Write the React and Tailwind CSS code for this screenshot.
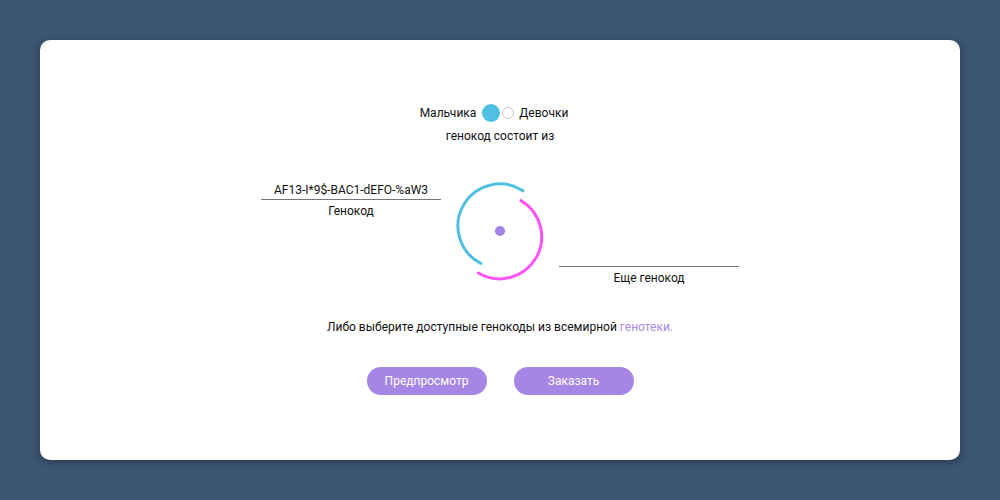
import React from "react";

function Arcs() {
  return (
    <svg width="100" height="108" viewBox="0 0 100 108" className="shrink-0">
      <path d="M30.9 85.4 A42 42 0 1 1 72.9 12.8" fill="none" stroke="#4fc0e1" strokeWidth="3" strokeLinecap="round" />
      <path d="M71 22.6 A42 42 0 1 1 28.4 95" fill="none" stroke="#fd55f3" strokeWidth="3" strokeLinecap="round" />
      <circle cx="50" cy="53" r="5" fill="#a584e6" />
    </svg>
  );
}

export default function App() {
  return (
    <div className="w-[1000px] h-[500px] bg-[#3c5573] p-10 font-['Roboto',sans-serif] text-[12px] text-[#111]">
      <div className="h-[420px] bg-white rounded-[10px] shadow-[0_2px_8px_rgba(0,0,0,0.35)] flex flex-col items-center pt-[64px]">
        <div className="flex items-center h-[18px] leading-[16px] mr-[12px]">
          <span className="mr-[6px]">Мальчика</span>
          <span className="w-[18px] h-[18px] rounded-full bg-[#4fc0e1]"></span>
          <span className="ml-[2px] w-[12px] h-[12px] rounded-full border border-[#c8c8c8] bg-white"></span>
          <span className="ml-[5px]">Девочки</span>
        </div>
        <div className="mt-[6px] leading-[16px]">генокод состоит из</div>

        <div className="mt-[34px] flex h-[108px] gap-[9px]">
          <div className="w-[180px] flex flex-col items-center self-start pt-[4px]">
            <div className="w-full text-center leading-[16px] pb-[1px] border-b border-[#777]">AF13-I*9$-BAC1-dEFO-%aW3</div>
            <div className="mt-[3px] leading-[16px]">Генокод</div>
          </div>
          <Arcs />
          <div className="w-[180px] flex flex-col items-center self-end">
            <div className="w-full h-[17px] border-b border-[#777]"></div>
            <div className="mt-[3px] leading-[16px]">Еще генокод</div>
          </div>
        </div>

        <div className="mt-[33px] leading-[16px]">
          Либо выберите доступные генокоды из всемирной <span className="text-[#a98ae8]">генотеки.</span>
        </div>

        <div className="mt-[32px] flex gap-[27px]">
          <button className="w-[120px] h-[28px] rounded-full bg-[#a685e4] text-white text-[12px]">Предпросмотр</button>
          <button className="w-[120px] h-[28px] rounded-full bg-[#a685e4] text-white text-[12px]">Заказать</button>
        </div>
      </div>
    </div>
  );
}
